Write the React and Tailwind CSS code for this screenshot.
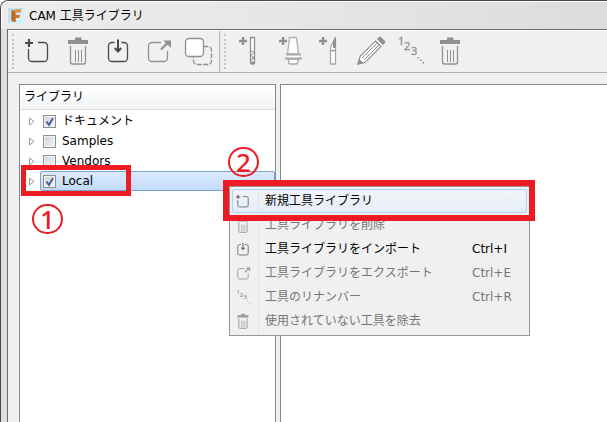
import { clsx } from "clsx";

const Icon = ({ className = "w-10 h-[41px]", stroke = 1.3, children }) => (
  <svg
    viewBox="0 0 40 41"
    className={className}
    fill="none"
    stroke="currentColor"
    strokeWidth={stroke}
    aria-hidden="true"
  >
    {children}
  </svg>
);

const NewIcon = (props) => (
  <Icon {...props}>
    <path d="M20 11.5h6a3.5 3.5 0 0 1 3.5 3.5v12a3.5 3.5 0 0 1-3.5 3.5H14a3.5 3.5 0 0 1-3.5-3.5v-9" />
    <path d="M7 12h8M11 8v8" strokeWidth="2.2" />
  </Icon>
);

const TrashIcon = (props) => (
  <Icon {...props}>
    <path d="M10 9h20v4H10zM17 6.5h6.500v3H17z" fill="currentColor" stroke="none" />
    <path d="M12.5 15v16a2 2 0 0 0 2 2h11a2 2 0 0 0 2-2V15" />
    <path d="M17.5 19v12M20.5 19v12M23.5 19v12" strokeWidth="1" />
  </Icon>
);

const ImportIcon = (props) => (
  <Icon {...props}>
    <path d="M16.5 11.5H14a3.5 3.5 0 0 0-3.5 3.5v12a3.5 3.5 0 0 0 3.5 3.5h12a3.5 3.5 0 0 0 3.5-3.5V15a3.5 3.5 0 0 0-3.5-3.5h-2.500" />
    <path d="M20 8.5V20M16.800 17l3.200 3.500 3.200-3.500" strokeWidth="2" />
  </Icon>
);

const ExportIcon = (props) => (
  <Icon {...props}>
    <path d="M23 11.5h-9a3.5 3.5 0 0 0-3.5 3.5v12a3.5 3.5 0 0 0 3.5 3.5h12a3.5 3.5 0 0 0 3.5-3.5v-7" />
    <path d="M23 18.5l6.500-6.500" strokeWidth="2.2" />
    <path d="M25.5 9.5H33V17l-2.500-2.500-2.800-2.500z" fill="currentColor" stroke="none" />
  </Icon>
);

const CopyIcon = (props) => (
  <Icon {...props}>
    <rect x="15.5" y="15.5" width="18" height="18" rx="3.5" strokeDasharray="5 1.5" />
    <rect x="7.5" y="7.5" width="18" height="18" rx="3.5" fill="#fff" />
  </Icon>
);

const MillIcon = (props) => (
  <Icon {...props}>
    <path d="M9 10h8M13 6v8" strokeWidth="2.4" />
    <path d="M20.5 6.5h4V21h-4z" fill="#fff" />
    <path d="M20.5 21v11l1 1h2l1-1V21" fill="#fff" />
    <path d="M20.5 25l4-4M20.5 30l4-5M21 24l3 4" strokeWidth="1" />
    <path d="M20.5 30.5h4V33h-4z" fill="currentColor" stroke="none" />
  </Icon>
);

const HolderIcon = (props) => (
  <Icon {...props}>
    <path d="M9 10h8M13 6v8" strokeWidth="2.4" />
    <path d="M19.5 6.5h7L28.5 23h-11z" fill="#fff" stroke="#b0b0b0" />
    <path d="M18.5 28v3.5l1.500 1.500h6.500l1.500-1.500V28z" fill="#fff" stroke="#a5a5a5" />
    <path d="M18 24h11v3H18z" fill="#fff" stroke="none" />
    <path d="M16 23.5h15M15 27.5h17" stroke="#a8a8a8" strokeWidth="1.800" />
  </Icon>
);

const LatheIcon = (props) => (
  <Icon {...props}>
    <path d="M9 10h8M13 6v8" strokeWidth="2.4" />
    <path d="M20.5 19.5h5V33h-5z" fill="#fff" stroke="#a5a5a5" />
    <path d="M25.5 6.5v13h-5v-3z" fill="#fff" stroke="#a5a5a5" />
    <path d="M26 5.5l-3 5V17h3z" fill="currentColor" stroke="none" />
  </Icon>
);

const PencilIcon = (props) => (
  <Icon {...props}>
    <path d="M10 25.5L25.500 10l5.500 5.500L15.500 31 8 33z" fill="#fff" strokeWidth="1.1" />
    <path d="M12 27L27 12M14 29l15-15" strokeWidth="1" />
    <path d="M7 34l1.800-6.500 4.700 4.700z" fill="currentColor" stroke="none" />
    <path d="M27 8l2-2q1-.8 2 0l4 4q.8 1 0 2l-2 2z" fill="currentColor" stroke="none" />
  </Icon>
);

const RenumberIcon = (props) => (
  <Icon {...props}>
    <g
      fill="currentColor"
      stroke="currentColor"
      strokeWidth="0.3"
      fontSize="11"
      fontFamily="'Noto Sans', sans-serif"
    >
      <text x="8" y="14">1</text>
      <text x="14" y="19">2</text>
      <text x="21" y="24">3</text>
    </g>
    <path d="M27.5 26h1.500v1.500h-1.500zM30 28.5h1.500V30H30zM32.500 31H34v1.500h-1.500z" fill="currentColor" stroke="none" />
  </Icon>
);

const AppLogo = () => (
  <svg viewBox="0 0 16 16" className="w-4 h-4" aria-hidden="true">
    <rect width="16" height="16" fill="#bfe3f4" />
    <path d="M0 16L16 0v16z" fill="#d8eff9" />
    <path d="M3.5 2l9.500-1v3.5H7.500V7H12l-1 3H7.500v4H3.5z" fill="#e8913c" />
    <path d="M3.5 2l4 2.500V14l-4-2z" fill="#b9682c" />
    <path d="M7.5 7H12l-1 3H7.500z" fill="#c9742c" />
  </svg>
);

const libraryTools = [
  { label: "新規工具ライブラリ", icon: NewIcon, active: true },
  { label: "工具ライブラリを削除", icon: TrashIcon },
  { label: "工具ライブラリをインポート", icon: ImportIcon, active: true },
  { label: "工具ライブラリをエクスポート", icon: ExportIcon },
  { label: "コピー", icon: CopyIcon },
];

const toolTools = [
  { label: "新規ミル工具", icon: MillIcon },
  { label: "新規ホルダ", icon: HolderIcon },
  { label: "新規旋削工具", icon: LatheIcon },
  { label: "工具を編集", icon: PencilIcon },
  { label: "工具のリナンバー", icon: RenumberIcon },
  { label: "工具を削除", icon: TrashIcon },
];

const libraries = [
  { name: "ドキュメント", checked: true },
  { name: "Samples", checked: false },
  { name: "Vendors", checked: false },
  { name: "Local", checked: true, selected: true },
];

const menuItems = [
  { label: "新規工具ライブラリ", icon: NewIcon, enabled: true, highlighted: true },
  { label: "工具ライブラリを削除", icon: TrashIcon },
  { label: "工具ライブラリをインポート", icon: ImportIcon, shortcut: "Ctrl+I", enabled: true },
  { label: "工具ライブラリをエクスポート", icon: ExportIcon, shortcut: "Ctrl+E" },
  { label: "工具のリナンバー", icon: RenumberIcon, shortcut: "Ctrl+R" },
  { label: "使用されていない工具を除去", icon: TrashIcon },
];

const ToolGroup = ({ tools, className }) => (
  <div className={clsx("flex", className)}>
    <div className="w-[10px] pl-1 py-[3px]">
      <div className="h-full border-l-2 border-dotted border-[#c4c4c4]" />
    </div>
    {tools.map(({ label, icon: ToolIcon, active }) => (
      <button
        key={label}
        type="button"
        aria-label={label}
        className={active ? "text-[#4a4a4a]" : "text-[#909090]"}
      >
        <ToolIcon />
      </button>
    ))}
  </div>
);

const LibraryRow = ({ name, checked, selected }) => (
  <li className="flex h-5 items-center pl-[9px]">
    <svg viewBox="0 0 6 9" className="w-[6px] h-[9px] mr-[5px] shrink-0" aria-hidden="true">
      <path d="M.5 1v7L5 4.500z" fill="#fff" stroke="#9a9a9a" />
    </svg>
    <label
      className={clsx(
        "flex h-5 flex-1 items-center gap-[6px] rounded-xs border pl-[2px]",
        selected
          ? "border-[#7da2ce] bg-linear-to-b from-[#dcebfc] to-[#c1dbfc]"
          : "border-transparent"
      )}
    >
      <span className="grid">
        <input
          type="checkbox"
          defaultChecked={checked}
          className="peer col-start-1 row-start-1 h-[13px] w-[13px] appearance-none border border-[#8e8f8f] bg-linear-to-br from-[#d0d3d8] to-[#f6f6f6] shadow-[inset_0_0_0_1px_#f4f4f4]"
        />
        <svg
          viewBox="0 0 13 13"
          className="invisible col-start-1 row-start-1 h-[13px] w-[13px] peer-checked:visible pointer-events-none"
          aria-hidden="true"
        >
          <path d="M3.5 6.5l2.500 3.500L10 3" fill="none" stroke="#42639c" strokeWidth="2" />
        </svg>
      </span>
      {name}
    </label>
  </li>
);

const ContextMenu = () => (
  <div
    role="menu"
    className="absolute left-[229px] top-[186px] w-[301px] border border-[#979797] bg-[#f0f0f0] p-[2px]"
  >
    {menuItems.map(({ label, icon: ItemIcon, shortcut, enabled, highlighted }) => (
      <button
        key={label}
        type="button"
        role="menuitem"
        disabled={!enabled}
        className={clsx(
          "flex h-6 w-full items-center text-left",
          enabled ? "text-black" : "text-[#757575]",
          highlighted &&
            "rounded-[3px] bg-linear-to-b from-[#f2f4f8] to-[#e5ecf7] inset-ring inset-ring-[#aecff7]"
        )}
      >
        <span
          className={clsx(
            "flex h-full w-[27px] items-center border-r border-[#e2e3e3]",
            enabled ? "text-[#6a6a6a]" : "text-[#999]"
          )}
        >
          <ItemIcon className="h-[23px] w-[22px]" stroke={1.6} />
        </span>
        <span className="flex-1 pl-[6px]">{label}</span>
        {shortcut && <span className="w-[55px]">{shortcut}</span>}
      </button>
    ))}
  </div>
);

const StepNumber = ({ className, children }) => (
  <span
    className={clsx(
      "absolute flex h-[30px] w-[31px] items-center justify-center rounded-full border-2 border-[#ed1c24] font-['Noto_Sans',sans-serif] text-[26px] leading-none font-medium text-[#ed1c24]",
      className
    )}
  >
    {children}
  </span>
);

const App = () => {
  return (
    <div className="relative flex min-h-screen flex-col overflow-hidden rounded-tl-lg border-l border-t border-[#4a4648] bg-[#e0dfdf] font-['DejaVu_Sans','Noto_Sans_CJK_JP',sans-serif] text-xs text-black">
      <header className="flex h-7 items-center gap-[5px] border-l border-t border-white bg-linear-to-r from-[#ececec] via-[#e6e6e6] to-[#dcdcdc] pl-[6px]">
        <AppLogo />
        <h1>CAM 工具ライブラリ</h1>
      </header>

      <main className="ml-[6px] flex flex-1 flex-col border-l border-t border-[#6f6b6d] bg-[#f0f0f0]">
        <div className="flex h-[43px] border-b border-t border-b-[#b4b4b4] border-t-white">
          <ToolGroup tools={libraryTools} />
          <ToolGroup tools={toolTools} className="ml-px border-l border-[#b4b4b4]" />
        </div>

        <div className="flex flex-1 gap-1 pl-[11px] pt-[11px]">
          <section className="w-[257px] shrink-0 border-x border-t border-[#828790] bg-white">
            <h2 className="flex h-[25px] items-center border-b border-[#dcdde0] bg-linear-to-b from-white to-[#f2f3f5] pl-1">
              ライブラリ
            </h2>
            <ul className="pt-px">
              {libraries.map((library) => (
                <LibraryRow key={library.name} {...library} />
              ))}
            </ul>
          </section>
          <section className="flex-1 border-l border-t border-[#828790] bg-white" />
        </div>
      </main>

      <div className="absolute -left-px -top-px">
        <ContextMenu />
        <div className="absolute left-[21px] top-[165px] h-[31px] w-[110px] border-5 border-[#ed1c24]" />
        <div className="absolute left-[223px] top-[180px] h-[41px] w-[312px] border-6 border-[#ed1c24]" />
        <StepNumber className="left-[32px] top-[204px]">1</StepNumber>
        <StepNumber className="left-[228px] top-[147px]">2</StepNumber>
      </div>
    </div>
  );
};

export default App;
